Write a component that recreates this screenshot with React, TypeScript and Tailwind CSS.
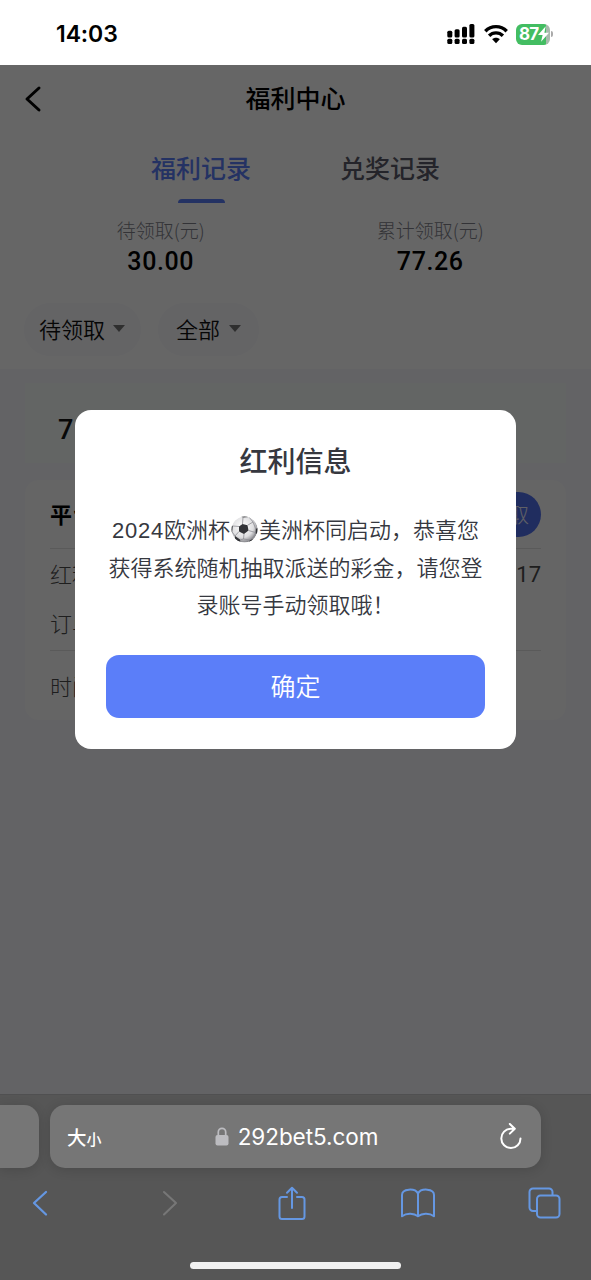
import React from "react";

function StatusBar() {
  return (
    <div className="flex h-[65px] shrink-0 items-center justify-between bg-white pt-[3px] pr-[38px] pl-[56px] text-black">
      <span className="font-['Inter'] text-[23px] leading-none font-semibold tracking-[-0.1px]">14:03</span>
      <div className="flex items-center">
        <svg width="28" height="22" viewBox="0 0 28 22" fill="currentColor">
          <rect x="0.3" y="7.8" width="5" height="6.6" rx="1.5" />
          <rect x="7.6" y="6.2" width="5" height="8.2" rx="1.5" />
          <rect x="15" y="3.8" width="5" height="10.6" rx="1.5" />
          <rect x="22.4" y="1" width="5" height="13.4" rx="1.5" />
          <rect x="0.3" y="15.8" width="5" height="5.2" rx="1.5" />
          <rect x="7.6" y="15.8" width="5" height="5.2" rx="1.5" />
          <rect x="15" y="15.8" width="5" height="5.2" rx="1.5" />
          <rect x="22.4" y="15.8" width="5" height="5.2" rx="1.5" />
        </svg>
        <svg className="ml-[9px]" width="24" height="20" viewBox="0 0 24 20" fill="none" stroke="currentColor" strokeWidth="3.4">
          <path d="M1.3 7.2C7.2 1.1 16.8 1.1 22.7 7.2" />
          <path d="M5.1 11.7c3.8-3.8 10-3.8 13.8 0" />
          <path d="M8.2 15.3c2-2 5.6-2 7.6 0L12 19.3z" fill="currentColor" stroke="none" />
        </svg>
        <div className="ml-[8px] flex h-[21px] w-[34px] items-center rounded-[6px] bg-linear-to-r from-[#43bd62] from-88% to-[#a9b9ad] to-88% pl-[3px] text-white">
          <span className="font-['Inter'] text-[17px] leading-none font-bold tracking-[-0.8px]">87</span>
          <svg width="11" height="16" viewBox="0 0 10 14" fill="currentColor">
            <path d="M7 0 0 8h4.2L2.8 14 10 5.8H5.8z" />
          </svg>
        </div>
        <span className="ml-[1px] h-[6px] w-[2px] rounded-r-full bg-[#aaa]" />
      </div>
    </div>
  );
}

function Stat({ label, value, className }: { label: string; value: string; className: string }) {
  return (
    <div className={className}>
      <span className="h-[24px] text-[19px] leading-[23px] font-light text-[#80818a]">{label}</span>
      <span className="h-[38px] pt-[1px] font-['Roboto'] text-[25px] leading-[38px] font-medium tracking-[0.6px] text-black">{value}</span>
    </div>
  );
}

function Filter({ label, className }: { label: string; className: string }) {
  return (
    <div className={className}>
      <span className="mb-[3px] text-[22px] leading-[30px] font-[350] text-[#101010]">{label}</span>
      <svg className="mb-[3px]" width="12" height="7" viewBox="0 0 12 7" fill="#777"><path d="M0 0h12L6 7z" /></svg>
    </div>
  );
}

function Page() {
  return (
    <div className="flex h-[1029px] flex-col bg-[#f7f7fc]">
      <div className="flex h-[304px] shrink-0 flex-col bg-white">
        <div className="grid h-[67px] grid-cols-[60px_1fr_60px] items-center">
          <svg className="ml-[24px]" width="18" height="28" viewBox="0 0 18 28" fill="none" stroke="#000" strokeWidth="3" strokeLinecap="round" strokeLinejoin="round"><path d="M15 3 3 14l12 11" /></svg>
          <h1 className="pb-[3px] text-center text-[25px] leading-[36px] font-medium text-black">福利中心</h1>
        </div>
        <div className="flex h-[71px] justify-center gap-[89px] pt-[16px] text-[25px] leading-[38px] font-medium">
          <div className="flex w-[100px] flex-col items-center">
            <span className="text-[#5b7df7]">福利记录</span>
            <span className="mt-[13px] h-[5px] w-[47px] rounded-t-[4px] bg-[#5b7df7]" />
          </div>
          <span className="w-[100px] text-[#5a5b69]">兑奖记录</span>
        </div>
        <div className="flex justify-between pt-[15px] pr-[26px] pl-[26px]">
          <Stat label="待领取(元)" value="30.00" className="flex w-[270px] flex-col items-center" />
          <Stat label="累计领取(元)" value="77.26" className="flex w-[270px] flex-col items-center" />
        </div>
        <div className="flex gap-[17px] pt-[23px] pl-[24px]">
          <Filter label="待领取" className="flex h-[53px] w-[117px] items-center gap-[8px] rounded-full bg-[#f9f9fd] pl-[15px]" />
          <Filter label="全部" className="flex h-[53px] w-[101px] items-center gap-[9px] rounded-full bg-[#f9f9fd] pl-[18px]" />
        </div>
      </div>
      <div className="mx-[25px] mt-[14px] flex h-[80px] shrink-0 items-center bg-[#f8fdf9] pt-[15px] pl-[33px]">
        <span className="font-['Roboto'] text-[27px] leading-none font-medium text-[#151515]">7</span>
      </div>
      <div className="mx-[25px] mt-[17px] flex h-[240px] shrink-0 flex-col rounded-[14px] bg-[#fdfdfd] px-[25px] text-[22px] font-light text-[#4c4c4c]">
        <div className="flex h-[69px] items-center justify-between border-b border-[#e2e2e2]">
          <span className="pb-[2px] font-bold text-black">平台</span>
          <div className="flex h-[45px] w-[82px] items-center justify-end rounded-full bg-[#5271ed] pr-[12px] pb-[1px] text-[21px] text-[#f0f0ff]">领取</div>
        </div>
        <div className="flex h-[102px] flex-col border-b border-[#e2e2e2]">
          <div className="flex h-[50px] items-center justify-between"><span className="pb-[2px]">红利</span><span className="font-['Roboto'] text-[22px] font-normal">17</span></div>
          <div className="flex h-[50px] items-center pb-[3px]"><span>订单</span></div>
        </div>
        <div className="flex h-[69px] items-center pb-[1px]"><span>时间</span></div>
      </div>
    </div>
  );
}

function SoccerBall() {
  return (
    <svg className="mx-[1px] inline-block align-[-5px]" width="27" height="27" viewBox="0 0 27 27">
      <defs>
        <radialGradient id="ball" cx="42%" cy="38%" r="65%">
          <stop offset="0" stopColor="#fff" /><stop offset=".65" stopColor="#dedee0" /><stop offset="1" stopColor="#77777c" />
        </radialGradient>
        <clipPath id="ball-edge"><circle cx="13.5" cy="13.5" r="13" /></clipPath>
      </defs>
      <g clipPath="url(#ball-edge)">
        <circle cx="13.5" cy="13.5" r="13" fill="url(#ball)" />
        <path d="M11.5 8 16.5 9.3 17.5 14.5 13 18 8 15.5 8 10.5zM9 0 12 1.5 18 1 17 0zM0 9 1.8 10 1.2 16-1 17zM27 11.5 24.8 13 24.5 18 27 17zM4 20 9 23.5 9.5 26 4 25zM19 24l-2 3h3l3-4z" fill="#333438" />
        <path d="M11.5 8 12 1.5M16.5 9.3 22 6M17.5 14.5l7 2M13 18l-.5 5L9 24M8 15.5 4 20M8 10.5 1.8 10M12.5 23 19 24l4-4 1.5-3M1.2 16 4 20M18 1l4 5 2.8 7" fill="none" stroke="#8e8e94" strokeWidth=".8" />
      </g>
    </svg>
  );
}

function Dialog() {
  return (
    <div className="absolute inset-x-0 top-0 flex h-full justify-center bg-black/60 pt-[345px]">
      <div className="flex h-[339px] w-[441px] flex-col items-center rounded-[16px] bg-white px-[31px] pt-[30px] text-[#36383f]">
        <h2 className="text-[28px] leading-[40px] font-medium">红利信息</h2>
        <div className="mt-[30px] flex flex-col items-center text-[22px] leading-[37.5px] font-[350] whitespace-nowrap">
          <p className="h-[37.5px]"><span className="font-['Liberation_Sans'] tracking-[0.8px]">2024</span>欧洲杯<SoccerBall />美洲杯同启动，恭喜您</p>
          <p className="h-[37.5px]">获得系统随机抽取派送的彩金，请您登</p>
          <p className="h-[37.5px]">录账号手动领取哦！</p>
        </div>
        <button className="mt-[32px] h-[63px] w-full shrink-0 rounded-[13px] bg-[#5b7ef9] pb-[2px] text-[25px] leading-[61px] font-[350] text-white">确定</button>
      </div>
    </div>
  );
}

function BrowserBar() {
  return (
    <div className="flex h-[186px] shrink-0 flex-col overflow-hidden border-t border-[#505051] bg-[#565656] pt-[10px]">
      <div className="flex gap-[11px]">
        <div className="h-[63px] w-[39px] shrink-0 rounded-r-[15px] bg-[#767676] shadow-[0_2px_12px_rgba(0,0,0,0.14)]" />
        <div className="grid h-[63px] w-[491px] shrink-0 grid-cols-[80px_1fr_80px] items-center rounded-[15px] bg-[#767676] text-white shadow-[0_2px_12px_rgba(0,0,0,0.14)]">
          <div className="flex items-baseline pl-[17px] font-medium">
            <span className="text-[19.5px]">大</span><span className="text-[15px]">小</span>
          </div>
          <div className="flex items-center justify-center gap-[9px] pl-[2px]">
            <svg width="14" height="19" viewBox="0 0 14 19"><rect x="0.5" y="8" width="13" height="10.5" rx="2" fill="#bcbcc0" /><path d="M3.3 8V5a3.7 3.7 0 0 1 7.4 0v3" fill="none" stroke="#bcbcc0" strokeWidth="1.7" /></svg>
            <span className="pt-[1px] font-['Inter'] text-[22.5px] leading-none tracking-[-0.05px]">292bet5.com</span>
          </div>
          <svg className="ml-[38px]" width="24" height="27" viewBox="0 0 24 27" fill="none" stroke="currentColor" strokeWidth="2" strokeLinecap="round" strokeLinejoin="round"><path d="M15.3 5.8h-3.5a9.6 9.6 0 1 0 9.7 9.6M10.8 1l5 4.8-5 4.8" /></svg>
        </div>
      </div>
      <div className="flex h-[70px] items-center justify-between pr-[30px] pl-[31px] text-[#6597e2]">
        <svg width="18" height="28" viewBox="0 0 18 28" fill="none" stroke="currentColor" strokeWidth="2.3" strokeLinecap="round" strokeLinejoin="round"><path d="M15 3 3 14l12 11.5" /></svg>
        <svg className="ml-[19px]" width="18" height="28" viewBox="0 0 18 28" fill="none" stroke="#777" strokeWidth="2.1" strokeLinecap="round" strokeLinejoin="round"><path d="m3 3 12 11L3 25.5" /></svg>
        <svg className="ml-[7px]" width="28" height="35" viewBox="0 0 28 35" fill="none" stroke="currentColor" strokeWidth="2" strokeLinecap="round" strokeLinejoin="round"><path d="M9 11H4a2.5 2.5 0 0 0-2.5 2.5v17A2.5 2.5 0 0 0 4 33h20a2.5 2.5 0 0 0 2.5-2.5v-17A2.5 2.5 0 0 0 24 11h-5M14 22V2M9 6.8l5-5 5 5" /></svg>
        <svg className="ml-[1px]" width="36" height="30" viewBox="0 0 36 30" fill="none" stroke="currentColor" strokeWidth="2" strokeLinecap="round" strokeLinejoin="round"><path d="M18 5.5v22.8c-3.8-3-11-4-16 0V7C2 .5 15-.2 18 5.5 21-.2 34 .5 34 7v21.3c-5-4-12.2-3-16 0" /></svg>
        <svg width="33" height="32" viewBox="0 0 33 32" fill="none" stroke="currentColor" strokeWidth="2" strokeLinejoin="round"><path d="M8.5 24H5a3.5 3.5 0 0 1-3.5-3.5V5A3.5 3.5 0 0 1 5 1.5h16A3.5 3.5 0 0 1 24.5 5v3" /><rect x="9" y="8.5" width="22.5" height="22" rx="3.5" /></svg>
      </div>
      <div className="mt-[24px] ml-[190px] h-[7px] w-[211px] shrink-0 rounded-full bg-[#f0f0f0]" />
    </div>
  );
}

export default function App() {
  return (
    <div className="flex h-[1280px] w-[591px] flex-col overflow-hidden font-['Noto_Sans_CJK_SC',sans-serif]">
      <StatusBar />
      <main className="relative h-[1029px] shrink-0">
        <Page />
        <Dialog />
      </main>
      <BrowserBar />
    </div>
  );
}
